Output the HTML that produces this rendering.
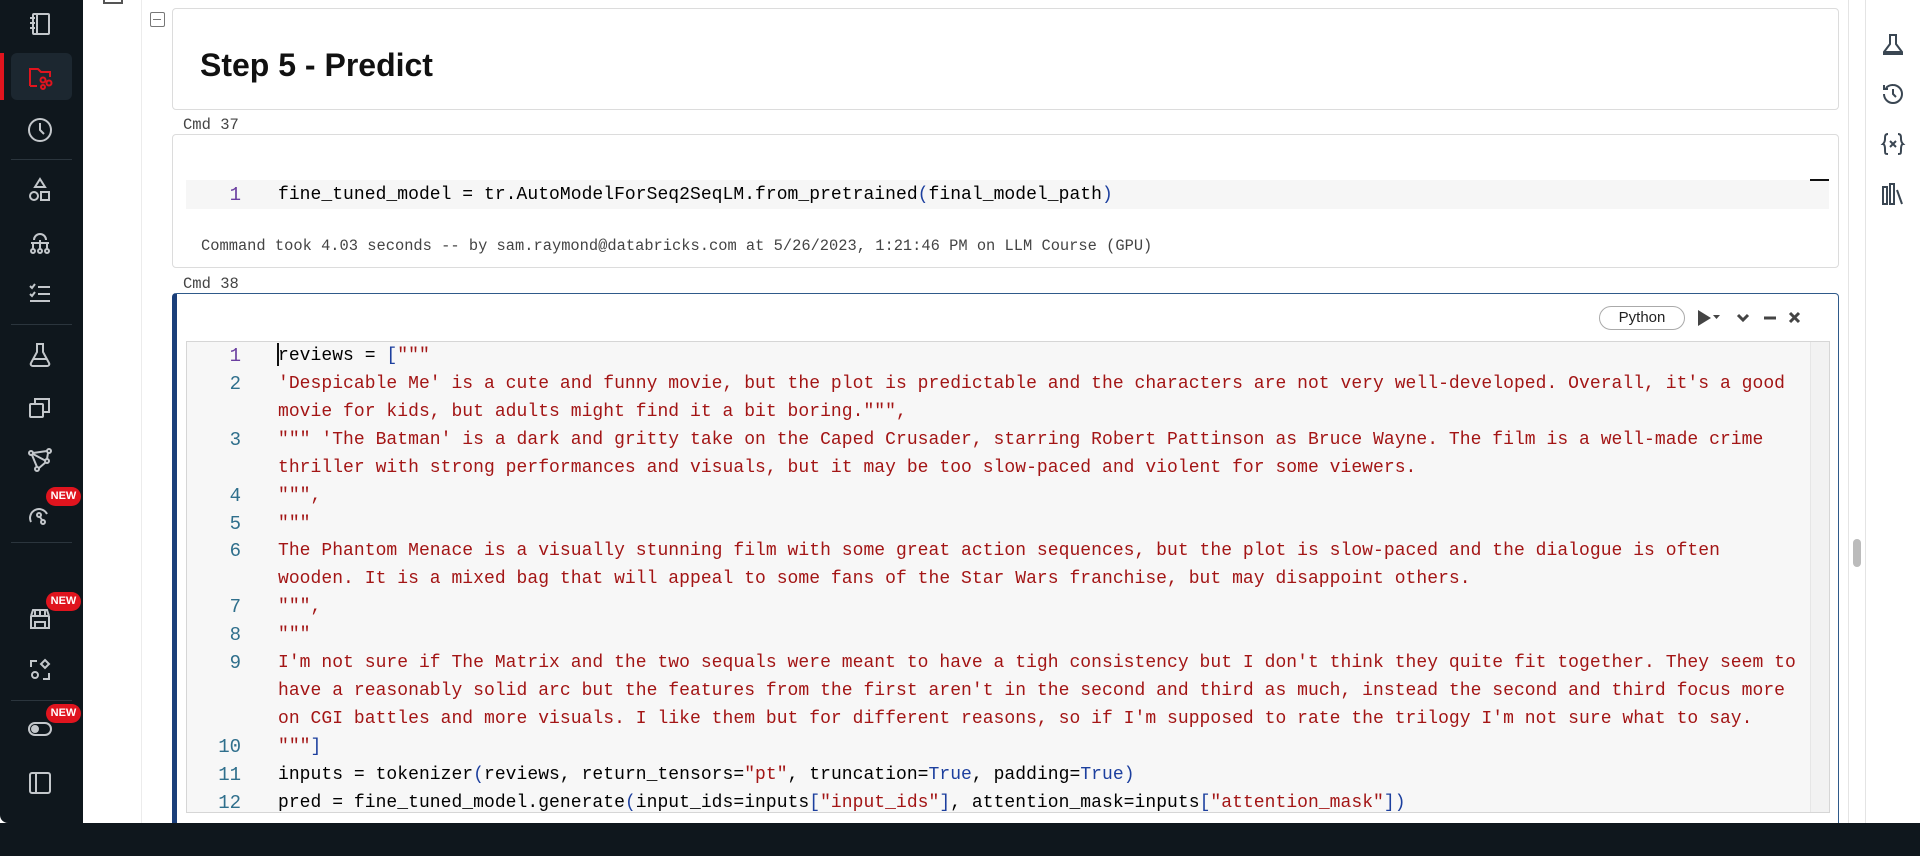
<!DOCTYPE html>
<html><head><meta charset="utf-8"><style>
*{margin:0;padding:0;box-sizing:border-box}
body{width:1920px;height:856px;overflow:hidden;background:#fff;font-family:"Liberation Sans",sans-serif;position:relative}
.abs{position:absolute}
#side{left:0;top:0;width:83px;height:823px;background:#0f171d;border-bottom-left-radius:8px;z-index:5}
#bot{left:0;top:823px;width:1920px;height:33px;background:#0f171d;z-index:10}
.ic{position:absolute;left:25px;width:30px;height:30px}
.ic svg{width:30px;height:30px;fill:none;stroke:#c3c7cb;stroke-width:2}
.sep{position:absolute;left:11px;width:61px;height:1px;background:#2b353d}
.new{position:absolute;left:46px;width:35px;height:19px;background:#e0141e;border-radius:10px;color:#fff;font-size:11px;font-weight:bold;text-align:center;line-height:19px}
.cell{position:absolute;left:172px;width:1667px;border:1px solid #dcdcdc;border-radius:4px;background:#fff}
.cmd{position:absolute;left:183px;font-family:"Liberation Mono",monospace;font-size:15.5px;color:#444}
.code{position:absolute;font-family:"Liberation Mono",monospace;font-size:18px;letter-spacing:0.04px;white-space:pre;line-height:28px;height:28px}
.ln{position:absolute;left:186px;width:55px;text-align:right;font-family:"Liberation Mono",monospace;font-size:19px;color:#2f6f8c;line-height:28px}
.s{color:#a31515}.b{color:#1c3f9e}
.ric{position:absolute;left:1880px;width:26px;height:26px}
.ric svg{width:26px;height:26px;fill:none;stroke:#3a4652;stroke-width:2}
</style></head><body>
<div id="side" class="abs">
 <div class="ic" style="top:9px"><svg viewBox="0 0 30 30"><rect x="8" y="5" width="16" height="20" rx="1"/><path d="M12 5v20M5 9h5M5 14h5M5 19h5"/></svg></div>
 <div class="abs" style="left:0;top:53px;width:4px;height:47px;background:#e0141e"></div>
 <div class="abs" style="left:11px;top:53px;width:61px;height:47px;background:#1c2730;border-radius:6px"></div>
 <div class="ic" style="top:62px"><svg viewBox="0 0 30 30" style="stroke:#e0141e"><path d="M5 24V7h8l3 3h9v5M5 24h7"/><circle cx="18" cy="18" r="2.5"/><circle cx="24" cy="21" r="2.5"/><circle cx="18" cy="25" r="2"/></svg></div>
 <div class="ic" style="top:115px"><svg viewBox="0 0 30 30"><circle cx="15" cy="15" r="11"/><path d="M15 8v7l4 4"/></svg></div>
 <div class="sep" style="top:159px"></div>
 <div class="ic" style="top:175px"><svg viewBox="0 0 30 30"><path d="M15 4l5 8H10z"/><circle cx="9" cy="21" r="4"/><rect x="16" y="17" width="8" height="8"/></svg></div>
 <div class="ic" style="top:227px"><svg viewBox="0 0 30 30"><path d="M9 13a6 6 0 0112 0M6 16h18M8 16v6M15 13v9M22 16v6"/><circle cx="8" cy="24" r="2"/><circle cx="15" cy="24" r="2"/><circle cx="22" cy="24" r="2"/></svg></div>
 <div class="ic" style="top:278px"><svg viewBox="0 0 30 30"><path d="M5 8l2 2 3-4M13 9h12M5 16l2 2 3-4M13 16h12M5 23h20"/></svg></div>
 <div class="sep" style="top:324px"></div>
 <div class="ic" style="top:340px"><svg viewBox="0 0 30 30"><path d="M11 4h8M12 4v8l-6 11a2 2 0 002 3h14a2 2 0 002-3l-6-11V4M8 19h14"/></svg></div>
 <div class="ic" style="top:393px"><svg viewBox="0 0 30 30"><rect x="5" y="11" width="13" height="13" rx="1"/><path d="M10 11V6h14v13h-6"/></svg></div>
 <div class="ic" style="top:445px"><svg viewBox="0 0 30 30"><circle cx="6" cy="8" r="2"/><circle cx="24" cy="6" r="2"/><circle cx="12" cy="24" r="2"/><circle cx="22" cy="16" r="2"/><path d="M8 8l14-2M7 10l5 12M14 23l7-6M23 8l-1 6M8 9l13 7"/></svg></div>
 <div class="ic" style="top:498px"><svg viewBox="0 0 30 30"><path d="M6 24a7 7 0 0116-8"/><circle cx="14" cy="17" r="2"/><circle cx="18" cy="24" r="2"/><path d="M15 19l2 3"/></svg></div>
 <div class="new" style="top:487px">NEW</div>
 <div class="sep" style="top:542px"></div>
 <div class="ic" style="top:604px"><svg viewBox="0 0 30 30"><path d="M6 12l2-6h14l2 6M6 12h18M6 12v12h18V12M10 6v6M15 6v6M20 6v6M10 24v-6h10v6"/></svg></div>
 <div class="new" style="top:592px">NEW</div>
 <div class="ic" style="top:655px"><svg viewBox="0 0 30 30"><path d="M6 12V6h6M24 18v6h-6"/><circle cx="10" cy="20" r="3"/><path d="M20 5l4 4-4 4-4-4z"/></svg></div>
 <div class="sep" style="top:700px"></div>
 <div class="ic" style="top:713px"><svg viewBox="0 0 30 30"><rect x="4" y="10" width="22" height="12" rx="6"/><circle cx="10" cy="16" r="3" fill="#c3c7cb"/></svg></div>
 <div class="new" style="top:704px">NEW</div>
 <div class="ic" style="top:768px"><svg viewBox="0 0 30 30"><rect x="5" y="5" width="20" height="20" rx="2"/><path d="M11 5v20"/></svg></div>
</div>
<div id="bot" class="abs"></div>

<div class="abs" style="left:103px;top:-4px;width:20px;height:8px;border:2px solid #555;border-top:none"></div>
<div class="abs" style="left:141px;top:0;width:1px;height:823px;background:#ececec"></div>
<div class="abs" style="left:150px;top:12px;width:15px;height:15px;border:1.5px solid #777;border-radius:2px"><div style="position:absolute;left:2px;top:5.5px;width:8px;height:1.5px;background:#777"></div></div>

<div class="cell" style="top:8px;height:102px"></div>
<div class="abs" style="left:200px;top:47px;font-size:32px;font-weight:bold;color:#111">Step 5 - Predict</div>

<div class="cmd" style="top:116px">Cmd 37</div>
<div class="cell" style="top:134px;height:134px"></div>
<div class="abs" style="left:186px;top:180px;width:1643px;height:29px;background:#f6f6f6"></div>
<div class="abs" style="left:1810px;top:179px;width:19px;height:2px;background:#111"></div>
<div class="ln" style="top:181px;color:#6b3fa0">1</div>
<div class="code" style="left:278px;top:181px">fine_tuned_model = tr.AutoModelForSeq2SeqLM.from_pretrained<span class="b">(</span>final_model_path<span class="b">)</span></div>
<div class="abs" style="left:201px;top:237px;font-family:'Liberation Mono',monospace;font-size:15.4px;color:#444;white-space:pre">Command took 4.03 seconds -- by sam.raymond@databricks.com at 5/26/2023, 1:21:46 PM on LLM Course (GPU)</div>

<div class="cmd" style="top:275px">Cmd 38</div>
<div class="cell" style="top:293px;height:545px;border-color:#2f5a8a;border-left:5px solid #1b3f7a"></div>
<div class="abs" style="left:1599px;top:306px;width:86px;height:24px;border:1px solid #aaa;border-radius:12px;font-size:15px;text-align:center;line-height:22px;color:#222">Python</div>
<svg class="abs" style="left:1696px;top:308px" width="120" height="20" viewBox="0 0 120 20"><path d="M2 2l13 8-13 8z" fill="#444"/><path d="M17 7h7l-3.5 4z" fill="#444"/><path d="M42 7l5 5 5-5" stroke="#444" stroke-width="3" fill="none"/><path d="M68 10h12" stroke="#444" stroke-width="3"/><path d="M94 5l9 9M103 5l-9 9" stroke="#444" stroke-width="3"/></svg>

<div class="abs" style="left:186px;top:341px;width:1644px;height:472px;background:#f7f7f7;border:1px solid #d6d6d6"></div>
<div class="abs" style="left:1810px;top:342px;width:19px;height:470px;background:#f2f2f2;border-left:1px solid #e6e6e6"></div>
<div class="abs" style="left:277px;top:343px;width:2px;height:23px;background:#111"></div>

<div class="ln" style="top:342px;color:#6b3fa0">1</div><div class="code" style="left:278px;top:342px">reviews = <span class="b">[</span><span class="s">"""</span></div>
<div class="ln" style="top:370px">2</div><div class="code s" style="left:278px;top:370px">'Despicable Me' is a cute and funny movie, but the plot is predictable and the characters are not very well-developed. Overall, it's a good</div>
<div class="code s" style="left:278px;top:398px">movie for kids, but adults might find it a bit boring.""",</div>
<div class="ln" style="top:426px">3</div><div class="code s" style="left:278px;top:426px">""" 'The Batman' is a dark and gritty take on the Caped Crusader, starring Robert Pattinson as Bruce Wayne. The film is a well-made crime</div>
<div class="code s" style="left:278px;top:454px">thriller with strong performances and visuals, but it may be too slow-paced and violent for some viewers.</div>
<div class="ln" style="top:482px">4</div><div class="code s" style="left:278px;top:482px">""",</div>
<div class="ln" style="top:510px">5</div><div class="code s" style="left:278px;top:510px">"""</div>
<div class="ln" style="top:537px">6</div><div class="code s" style="left:278px;top:537px">The Phantom Menace is a visually stunning film with some great action sequences, but the plot is slow-paced and the dialogue is often</div>
<div class="code s" style="left:278px;top:565px">wooden. It is a mixed bag that will appeal to some fans of the Star Wars franchise, but may disappoint others.</div>
<div class="ln" style="top:593px">7</div><div class="code s" style="left:278px;top:593px">""",</div>
<div class="ln" style="top:621px">8</div><div class="code s" style="left:278px;top:621px">"""</div>
<div class="ln" style="top:649px">9</div><div class="code s" style="left:278px;top:649px">I'm not sure if The Matrix and the two sequals were meant to have a tigh consistency but I don't think they quite fit together. They seem to</div>
<div class="code s" style="left:278px;top:677px">have a reasonably solid arc but the features from the first aren't in the second and third as much, instead the second and third focus more</div>
<div class="code s" style="left:278px;top:705px">on CGI battles and more visuals. I like them but for different reasons, so if I'm supposed to rate the trilogy I'm not sure what to say.</div>
<div class="ln" style="top:733px">10</div><div class="code" style="left:278px;top:733px"><span class="s">"""</span><span class="b">]</span></div>
<div class="ln" style="top:761px">11</div><div class="code" style="left:278px;top:761px">inputs = tokenizer<span class="b">(</span>reviews, return_tensors=<span class="s">"pt"</span>, truncation=<span class="b">True</span>, padding=<span class="b">True</span><span class="b">)</span></div>
<div class="ln" style="top:789px">12</div><div class="code" style="left:278px;top:789px">pred = fine_tuned_model.generate<span class="b">(</span>input_ids=inputs<span class="b">[</span><span class="s">"input_ids"</span><span class="b">]</span>, attention_mask=inputs<span class="b">[</span><span class="s">"attention_mask"</span><span class="b">])</span></div>

<div class="abs" style="left:1848px;top:0;width:1px;height:823px;background:#e4e4e4"></div>
<div class="abs" style="left:1865px;top:0;width:1px;height:823px;background:#e4e4e4"></div>
<div class="abs" style="left:1853px;top:539px;width:8px;height:28px;background:#bbb;border-radius:4px"></div>
<div class="ric" style="top:32px"><svg viewBox="0 0 26 26"><path d="M9 3h8M10 3v9l-6 8v2h18v-2l-6-8V3M4 20h18"/></svg></div>
<div class="ric" style="top:81px"><svg viewBox="0 0 26 26"><path d="M4 13a9 9 0 109-9 9 9 0 00-7 3M4 4v4h4M13 8v5l3 3"/></svg></div>
<div class="ric" style="top:131px"><svg viewBox="0 0 26 26"><path d="M8 3c-3 0-3 2-3 5s-2 5-2 5 2 0 2 5 0 5 3 5M18 3c3 0 3 2 3 5s2 5 2 5-2 0-2 5 0 5-3 5M10 10l6 6M16 10l-6 6"/></svg></div>
<div class="ric" style="top:181px"><svg viewBox="0 0 26 26"><rect x="3" y="6" width="4" height="17"/><rect x="10" y="3" width="4" height="20"/><path d="M17 9l5 14"/></svg></div>
</body></html>
